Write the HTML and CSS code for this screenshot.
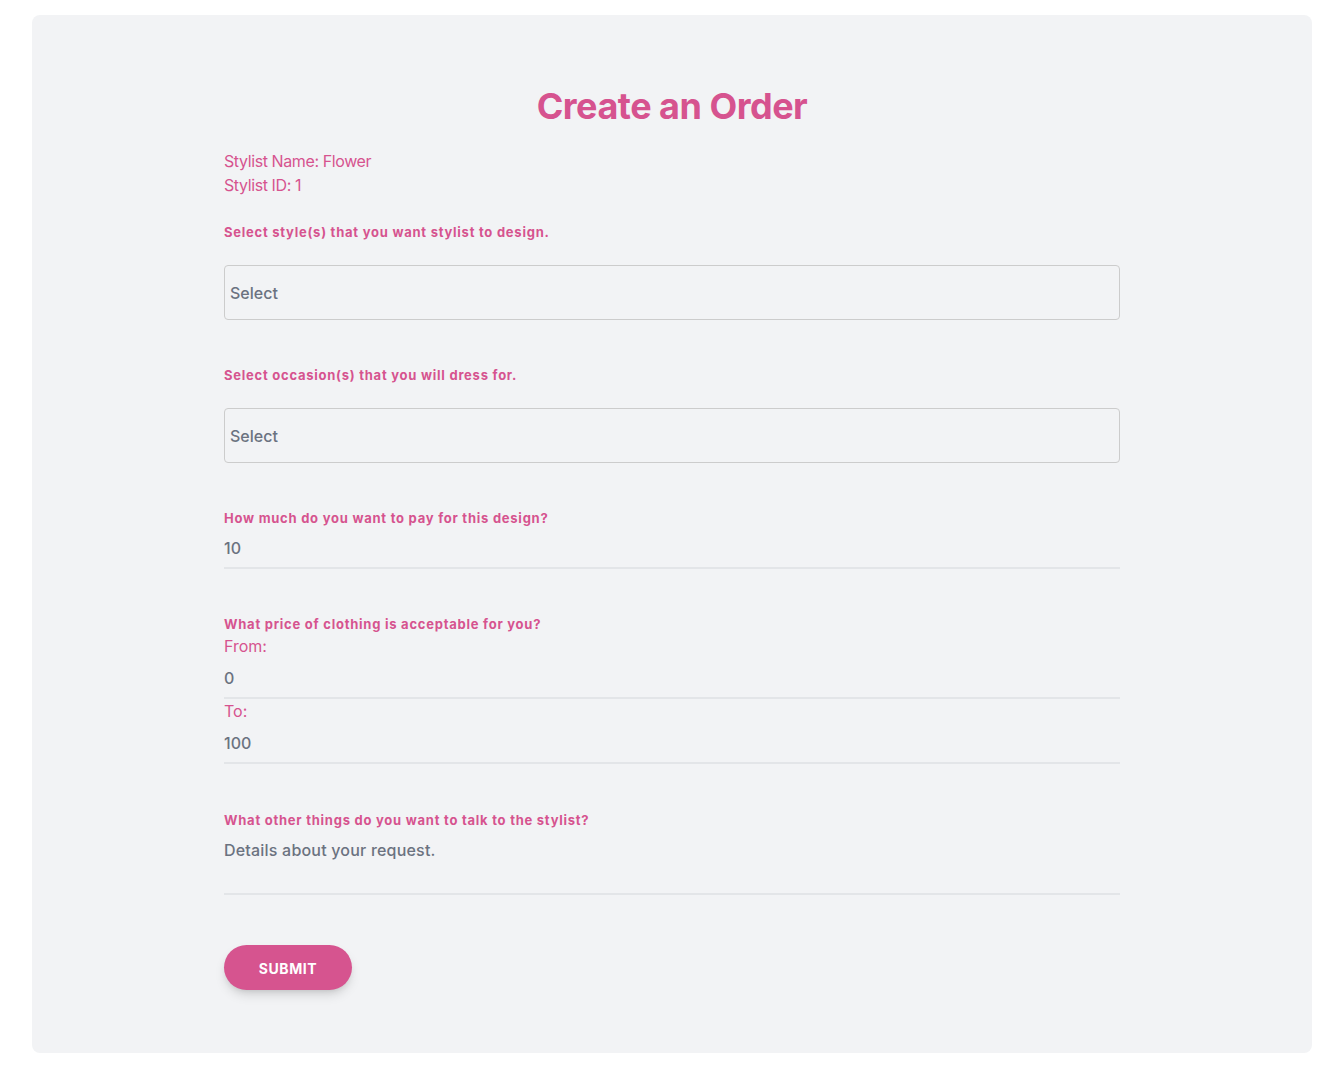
FILE: index.html
```html
<!DOCTYPE html>
<html lang="en">
<head>
<meta charset="utf-8">
<title>Create an Order</title>
<link rel="stylesheet" href="styles.css">
</head>
<body>
<div class="page">
  <main class="card">
    <form class="form">
      <h1 class="title">Create an Order</h1>
      <div class="stylist">
        <p>Stylist Name: Flower</p>
        <p>Stylist ID: 1</p>
      </div>

      <section class="group">
        <label class="label">Select style(s) that you want stylist to design.</label>
        <div class="select">Select</div>
      </section>

      <section class="group">
        <label class="label">Select occasion(s) that you will dress for.</label>
        <div class="select">Select</div>
      </section>

      <section class="group tight">
        <label class="label">How much do you want to pay for this design?</label>
        <input class="input" type="text" value="10">
      </section>

      <section class="group tight">
        <label class="label">What price of clothing is acceptable for you?</label>
        <span class="sub">From:</span>
        <input class="input" type="text" value="0">
        <span class="sub">To:</span>
        <input class="input" type="text" value="100">
      </section>

      <section class="group tight last">
        <label class="label">What other things do you want to talk to the stylist?</label>
        <textarea class="textarea">Details about your request.</textarea>
      </section>

      <div class="actions">
        <button type="button" class="submit">SUBMIT</button>
      </div>
    </form>
  </main>
</div>
</body>
</html>
```

FILE: styles.css
```css
* { box-sizing: border-box; }
html, body { margin: 0; padding: 0; background: #ffffff; }
body {
  font-family: Inter, "Noto Sans", "Liberation Sans", sans-serif;
  color: #d6538f;
}
.page {
  padding: 15px 32px 31px;
}
.card {
  background: #f2f3f5;
  border-radius: 8px;
  height: 1038px;
  padding-top: 71px;
}
.form {
  width: 896px;
  margin: 0 auto;
  display: flex;
  flex-direction: column;
}
.title {
  margin: 0;
  text-align: center;
  font-size: 36px;
  line-height: 40px;
  font-weight: 700;
  letter-spacing: -0.5px;
  color: #d6538f;
}
.stylist {
  margin-top: 23px;
}
.stylist p {
  margin: 0;
  font-size: 16px;
  line-height: 24px;
  letter-spacing: -0.4px;
  color: #d6538f;
}
.group {
  display: flex;
  flex-direction: column;
  margin-top: 25px;
}
.group + .group { margin-top: 45px; }
.label {
  font-size: 13px;
  line-height: 20px;
  font-weight: 700;
  letter-spacing: 0.75px;
  color: #d6538f;
}
.select {
  margin-top: 23px;
  height: 55px;
  border: 1px solid #cccccc;
  border-radius: 4px;
  padding: 0 5px;
  display: flex;
  align-items: center;
  font-size: 16px;
  font-weight: 500;
  color: #6b7280;
}
.group.tight + .group.tight { margin-top: 45px; }
.group.tight + .group.last { margin-top: 46px; }
.sub {
  font-size: 16px;
  line-height: 24px;
  color: #d6538f;
}
.input, .textarea {
  display: block;
  width: 100%;
  border: 0;
  border-bottom: 2px solid #e3e5e8;
  background: transparent;
  font-family: inherit;
  font-size: 16px;
  font-weight: 500;
  color: #6b7280;
  padding: 0;
  outline: none;
}
.input {
  height: 41px;
  line-height: 24px;
  padding-top: 1px;
}
.textarea {
  height: 65px;
  line-height: 24px;
  padding-top: 8px;
  letter-spacing: 0.2px;
  resize: none;
  overflow: hidden;
}
.actions {
  margin-top: 50px;
}
.submit {
  width: 128px;
  height: 45px;
  border: 0;
  border-radius: 9999px;
  background: #d6548f;
  color: #ffffff;
  font-family: inherit;
  font-size: 14px;
  font-weight: 700;
  letter-spacing: 0.6px;
  padding-top: 2px;
  box-shadow: 0 6px 12px -2px rgba(0,0,0,0.15), 0 3px 6px -3px rgba(0,0,0,0.12);
  cursor: pointer;
}
```
